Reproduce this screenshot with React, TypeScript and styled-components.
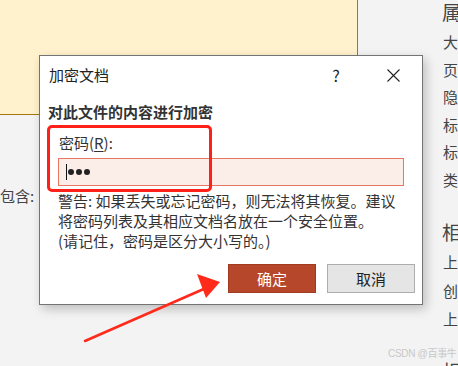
import styled, { createGlobalStyle } from "styled-components";

const GlobalStyle = createGlobalStyle`
   html, body {
      margin: 0;
      padding: 0;
      background: #f3f3f3;
   }
   * {
      box-sizing: border-box;
   }
`

const Page = styled.div`
   position: relative;
   width: 458px;
   height: 366px;
   overflow: hidden;
   background: #f3f3f3;
   font-family: "Noto Sans CJK SC", "Noto Sans", sans-serif;
   color: #333;
`

const Backdrop = styled.div`
   display: flex;
`

const LeftArea = styled.div`
   flex: none;
   width: 443px;
`

const YellowBox = styled.div`
   width: 358px;
   height: 115px;
   background: #fff2cc;
   border-right: 1px solid #a7770f;
   border-bottom: 1px solid #a7770f;
`

const ContainsLabel = styled.div`
   margin-top: 71px;
   font-size: 15px;
   line-height: 20px;
   color: #444;
`

const RightPanel = styled.div`
   flex: none;
   width: 15px;
   white-space: nowrap;
   color: #444;
`

const PanelHeading = styled.div<{ $gap: number }>`
   margin-top: ${p => p.$gap}px;
   font-size: 19px;
   line-height: 24px;
   margin-left: -1px;
`

const PanelList = styled.div<{ $row: number; $gap: number }>`
   margin-top: ${p => p.$gap}px;
   font-size: 15px;
   line-height: ${p => p.$row}px;
`

const Dialog = styled.div`
   position: absolute;
   left: 39px;
   top: 55px;
   width: 384px;
   height: 250px;
   background: #fff;
   border: 1px solid #747474;
   box-shadow: 3px 4px 10px rgba(0, 0, 0, 0.22);
`

const TitleBar = styled.div`
   display: flex;
   align-items: center;
   height: 38px;
   padding: 0 6px 0 9px;
`

const TitleText = styled.div`
   flex: 1;
   font-size: 15px;
   line-height: 20px;
   color: #222;
`

const TitleButton = styled.div`
   width: 46px;
   height: 30px;
   display: flex;
   align-items: center;
   justify-content: center;
   font-size: 16px;
   color: #222;
   margin-left: 11px;
`

const Body = styled.div`
   padding: 0 7px 0 8px;
`

const Heading = styled.div`
   margin-top: 8px;
   font-size: 15px;
   font-weight: bold;
   line-height: 20px;
   color: #333;
`

const FieldLabel = styled.div`
   margin: 11px 0 0 11px;
   font-size: 15px;
   line-height: 20px;
   color: #333;

   u {
      text-decoration-thickness: 1px;
      text-underline-offset: 2px;
   }
`

const PasswordBox = styled.div`
   display: flex;
   align-items: center;
   margin: 5px 0 0 10px;
   width: 346px;
   height: 28px;
   padding-left: 7px;
   background: #fbeee9;
   border: 1px solid #ea7560;
`

const Caret = styled.div`
   width: 1px;
   height: 16px;
   background: #111;
   margin-right: 1px;
`

const Dot = styled.div`
   width: 6px;
   height: 6px;
   border-radius: 50%;
   background: #222;
   margin-right: 2px;
`

const Warning = styled.div`
   margin: 5px 0 0 10px;
   font-size: 15px;
   line-height: 20px;
   color: #333;
`

const ButtonRow = styled.div`
   display: flex;
   justify-content: flex-end;
   gap: 11px;
   margin-top: 13px;
`

const Button = styled.div<{ $primary?: boolean }>`
   width: 88px;
   height: 29px;
   display: flex;
   align-items: center;
   justify-content: center;
   font-size: 15px;
   background: ${p => (p.$primary ? "#b7472a" : "#e5e5e5")};
   color: ${p => (p.$primary ? "#fff" : "#222")};
   border: 1px solid ${p => (p.$primary ? "#a03a20" : "#adadad")};
`

const Highlight = styled.div`
   position: absolute;
   left: 7px;
   top: 69px;
   width: 165px;
   height: 67px;
   border: 3px solid #ff2019;
   border-radius: 5px;
`

const Arrow = styled.svg`
   position: absolute;
   left: 0;
   top: 0;
   pointer-events: none;
`

const Watermark = styled.div`
   position: absolute;
   left: 388px;
   top: 346px;
   font-family: "Liberation Sans", "Noto Sans CJK SC", sans-serif;
   font-size: 10px;
   letter-spacing: -0.3px;
   line-height: 16px;
   color: #c8c8c8;
   white-space: nowrap;
`

// only the first character of each panel label is in view
const propertyItems = ["大", "页", "隐", "标", "标", "类"];
const dateItems = ["上", "创", "上"];

export default function App() {
   return (
      <Page>
         <GlobalStyle />
         <Backdrop>
            <LeftArea>
               <YellowBox />
               <ContainsLabel>包含:</ContainsLabel>
            </LeftArea>
            <RightPanel>
               <PanelHeading $gap={0}>属</PanelHeading>
               <PanelList $row={27.6} $gap={4}>
                  {propertyItems.map((item, i) => <div key={i}>{item}</div>)}
               </PanelList>
               <PanelHeading $gap={26}>相</PanelHeading>
               <PanelList $row={28.5} $gap={4.5}>
                  {dateItems.map((item, i) => <div key={i}>{item}</div>)}
               </PanelList>
               <PanelHeading $gap={25}>相</PanelHeading>
            </RightPanel>
         </Backdrop>

         <Dialog>
            <TitleBar>
               <TitleText>加密文档</TitleText>
               <TitleButton>?</TitleButton>
               <TitleButton>
                  <svg width="13" height="13" viewBox="0 0 13 13">
                     <path d="M0.5 0.5 L12.5 12.5 M12.5 0.5 L0.5 12.5" stroke="#222" strokeWidth="1.1" />
                  </svg>
               </TitleButton>
            </TitleBar>
            <Body>
               <Heading>对此文件的内容进行加密</Heading>
               <FieldLabel>密码(<u>R</u>):</FieldLabel>
               <PasswordBox>
                  <Caret />
                  <Dot />
                  <Dot />
                  <Dot />
               </PasswordBox>
               <Warning>
                  警告: 如果丢失或忘记密码，则无法将其恢复。建议<br />
                  将密码列表及其相应文档名放在一个安全位置。<br />
                  (请记住，密码是区分大小写的。)
               </Warning>
               <ButtonRow>
                  <Button $primary>确定</Button>
                  <Button>取消</Button>
               </ButtonRow>
            </Body>
            <Highlight />
         </Dialog>

         <Arrow width="458" height="366" viewBox="0 0 458 366">
            <line x1="85" y1="341" x2="206" y2="288" stroke="#ff2a1a" strokeWidth="2.5" strokeLinecap="round" />
            <polygon points="220,282 197,274 206,298" fill="#ff2a1a" />
         </Arrow>

         <Watermark>CSDN @百事牛</Watermark>
      </Page>
   );
}
